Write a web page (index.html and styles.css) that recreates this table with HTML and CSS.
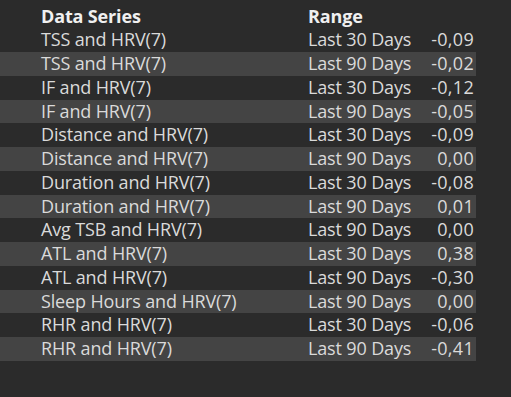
FILE: index.html
```html
<!DOCTYPE html>
<html>
<head>
<meta charset="utf-8">
<link rel="stylesheet" href="styles.css">
</head>
<body>
<div class="table">
  <div class="row head"><span class="c1">Data Series</span><span class="c2">Range</span><span class="c3"></span></div>
  <div class="row"><span class="c1">TSS and HRV(7)</span><span class="c2">Last 30 Days</span><span class="c3">-0,09</span></div>
  <div class="row alt"><span class="c1">TSS and HRV(7)</span><span class="c2">Last 90 Days</span><span class="c3">-0,02</span></div>
  <div class="row"><span class="c1">IF and HRV(7)</span><span class="c2">Last 30 Days</span><span class="c3">-0,12</span></div>
  <div class="row alt"><span class="c1">IF and HRV(7)</span><span class="c2">Last 90 Days</span><span class="c3">-0,05</span></div>
  <div class="row"><span class="c1">Distance and HRV(7)</span><span class="c2">Last 30 Days</span><span class="c3">-0,09</span></div>
  <div class="row alt"><span class="c1">Distance and HRV(7)</span><span class="c2">Last 90 Days</span><span class="c3">0,00</span></div>
  <div class="row"><span class="c1">Duration and HRV(7)</span><span class="c2">Last 30 Days</span><span class="c3">-0,08</span></div>
  <div class="row alt"><span class="c1">Duration and HRV(7)</span><span class="c2">Last 90 Days</span><span class="c3">0,01</span></div>
  <div class="row"><span class="c1">Avg TSB and HRV(7)</span><span class="c2">Last 90 Days</span><span class="c3">0,00</span></div>
  <div class="row alt"><span class="c1">ATL and HRV(7)</span><span class="c2">Last 30 Days</span><span class="c3">0,38</span></div>
  <div class="row"><span class="c1">ATL and HRV(7)</span><span class="c2">Last 90 Days</span><span class="c3">-0,30</span></div>
  <div class="row alt"><span class="c1">Sleep Hours and HRV(7)</span><span class="c2">Last 90 Days</span><span class="c3">0,00</span></div>
  <div class="row"><span class="c1">RHR and HRV(7)</span><span class="c2">Last 30 Days</span><span class="c3">-0,06</span></div>
  <div class="row alt"><span class="c1">RHR and HRV(7)</span><span class="c2">Last 90 Days</span><span class="c3">-0,41</span></div>
</div>
</body>
</html>
```
FILE: styles.css
```css
html, body {
  margin: 0;
  height: 100%;
  background: #2b2b2b;
}
body {
  font-family: "Open Sans", "Noto Sans", sans-serif;
  font-size: 18px;
  letter-spacing: -0.15px;
  color: #dadada;
}
.table {
  width: 476px;
  padding-top: 4.5px;
}
.row {
  display: grid;
  grid-template-columns: 308px minmax(0, 1fr) 70px;
  height: 23.75px;
  line-height: 23.75px;
  white-space: nowrap;
}
.row.alt {
  background: #444444;
}
.c1 {
  padding-left: 41px;
}
.c3 {
  text-align: right;
  padding-right: 2px;
  letter-spacing: 0.3px;
}
.head {
  font-weight: bold;
  color: #f0f0f0;
}
```
